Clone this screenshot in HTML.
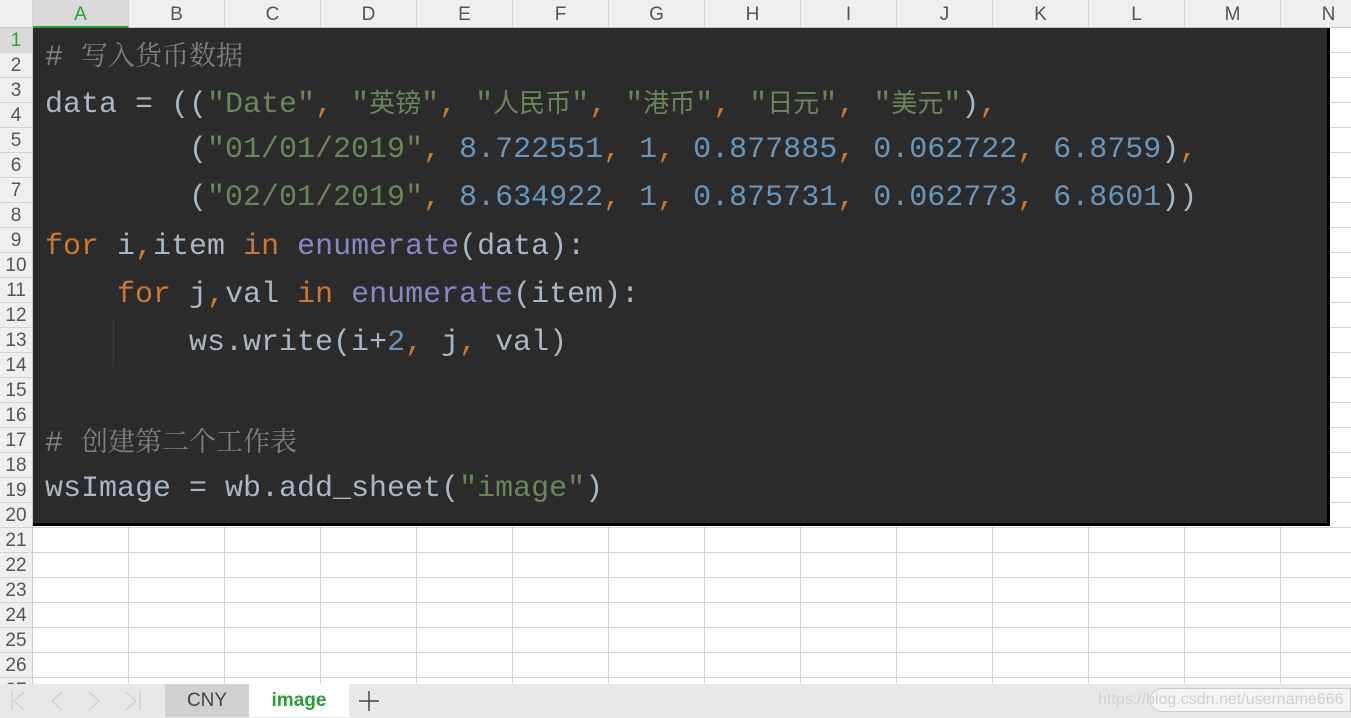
<!DOCTYPE html>
<html><head><meta charset="utf-8"><style>
*{margin:0;padding:0;box-sizing:border-box}
body{width:1351px;height:718px;overflow:hidden;background:#fff;font-family:"Liberation Sans",sans-serif;position:relative}
.grid{position:absolute;left:0;top:0;width:1351px;height:684px;
background-image:linear-gradient(to right,#d4d4d4 1px,transparent 1px),linear-gradient(to bottom,#d4d4d4 1px,transparent 1px);
background-size:96px 25px,96px 25px;background-position:32px 27px,0 27px}
.colh{position:absolute;left:0;top:0;width:1351px;height:28px;background:#efefef;border-bottom:1px solid #c8c8c8}
.colh div{position:absolute;top:0;height:27px;width:96px;text-align:center;line-height:30px;font-size:19px;color:#555;border-right:1px solid #d4d4d4}
.rowh{position:absolute;left:0;top:28px;width:33px;height:656px;background:#efefef;border-right:1px solid #c8c8c8}
.rowh div{position:absolute;left:0;width:32px;height:25px;line-height:26px;font-size:19px;color:#555;text-align:center;border-bottom:1px solid #d4d4d4}
.code{position:absolute;left:33px;top:28px;width:1297px;height:498px;background:#2b2b2b;border-right:3px solid #000;border-bottom:3px solid #000}
.ln{position:absolute;left:12px;height:40px;line-height:40px;font-family:"Liberation Mono","DejaVu Sans Mono",monospace;font-size:30px;color:#a9b7c6;white-space:pre}
.c{color:#808080}.k{color:#cc7832}.s{color:#6a8759}.n{color:#6897bb}.b{color:#8888c6}
.cj{font-family:"Noto Serif CJK SC",serif;font-size:27px;line-height:40px}
.cs{font-family:"Noto Sans CJK SC",sans-serif;font-size:26px;line-height:40px}
.tabs{position:absolute;left:0;top:684px;width:1351px;height:34px;background:#e8e8e8}
</style></head><body>
<div class="grid"></div>
<div class="colh">
<div style="left:0;width:33px;background:#efefef"></div>
<div style="left:33px;background:#d9d9d9;color:#2a9d3a;border-bottom:2px solid #2a9d3a;height:28px">A</div>
<div style="left:129px">B</div><div style="left:225px">C</div><div style="left:321px">D</div><div style="left:417px">E</div><div style="left:513px">F</div><div style="left:609px">G</div><div style="left:705px">H</div><div style="left:801px">I</div><div style="left:897px">J</div><div style="left:993px">K</div><div style="left:1089px">L</div><div style="left:1185px">M</div><div style="left:1281px">N</div>
</div>
<div class="rowh">
<div style="top:0;background:#d9d9d9;color:#2a9d3a">1</div><div style="top:25px">2</div><div style="top:50px">3</div><div style="top:75px">4</div><div style="top:100px">5</div><div style="top:125px">6</div><div style="top:150px">7</div><div style="top:175px">8</div><div style="top:200px">9</div><div style="top:225px">10</div><div style="top:250px">11</div><div style="top:275px">12</div><div style="top:300px">13</div><div style="top:325px">14</div><div style="top:350px">15</div><div style="top:375px">16</div><div style="top:400px">17</div><div style="top:425px">18</div><div style="top:450px">19</div><div style="top:475px">20</div><div style="top:500px">21</div><div style="top:525px">22</div><div style="top:550px">23</div><div style="top:575px">24</div><div style="top:600px">25</div><div style="top:625px">26</div><div style="top:650px">27</div>
</div>
<div class="code">
<div style="position:absolute;left:80px;top:290px;width:1px;height:48px;background:#3c3c3c"></div>
<div class="ln c" style="top:6px"># <span class="cj">写入货币数据</span></div>
<div class="ln" style="top:54px">data = ((<span class="s">"Date"</span><span class="k">, </span><span class="s">"<span class="cs">英镑</span>"</span><span class="k">, </span><span class="s">"<span class="cs">人民币</span>"</span><span class="k">, </span><span class="s">"<span class="cs">港币</span>"</span><span class="k">, </span><span class="s">"<span class="cs">日元</span>"</span><span class="k">, </span><span class="s">"<span class="cs">美元</span>"</span>)<span class="k">,</span></div>
<div class="ln" style="top:102px">        (<span class="s">"01/01/2019"</span><span class="k">, </span><span class="n">8.722551</span><span class="k">, </span><span class="n">1</span><span class="k">, </span><span class="n">0.877885</span><span class="k">, </span><span class="n">0.062722</span><span class="k">, </span><span class="n">6.8759</span>)<span class="k">,</span></div>
<div class="ln" style="top:150px">        (<span class="s">"02/01/2019"</span><span class="k">, </span><span class="n">8.634922</span><span class="k">, </span><span class="n">1</span><span class="k">, </span><span class="n">0.875731</span><span class="k">, </span><span class="n">0.062773</span><span class="k">, </span><span class="n">6.8601</span>))</div>
<div class="ln" style="top:199px"><span class="k">for</span> i<span class="k">,</span>item <span class="k">in</span> <span class="b">enumerate</span>(data):</div>
<div class="ln" style="top:247px">    <span class="k">for</span> j<span class="k">,</span>val <span class="k">in</span> <span class="b">enumerate</span>(item):</div>
<div class="ln" style="top:295px">        ws.write(i+<span class="n">2</span><span class="k">, </span>j<span class="k">, </span>val)</div>
<div class="ln c" style="top:392px"># <span class="cj">创建第二个工作表</span></div>
<div class="ln" style="top:441px">wsImage = wb.add_sheet(<span class="s">"image"</span>)</div>
</div>
<div class="tabs">
<svg style="position:absolute;left:0;top:0" width="160" height="34" stroke="#cfcfcf" stroke-width="1.5" fill="none">
<path d="M12 8v18M24 8l-10 9 10 9"/>
<path d="M62 8l-10 9 10 9"/>
<path d="M89 8l10 9-10 9"/>
<path d="M126 8l10 9-10 9M140 8v18"/>
</svg>
<div style="position:absolute;left:165px;top:0;width:84px;height:33px;background:#d0d0d0;text-align:center;line-height:34px;font-size:19px;color:#444">CNY</div>
<div style="position:absolute;left:249px;top:0;width:100px;height:33px;background:#fff;text-align:center;line-height:34px;font-size:19px;font-weight:bold;color:#2a9d3a">image</div>
<svg style="position:absolute;left:358px;top:6px" width="22" height="22" stroke="#444" stroke-width="1.5"><path d="M11 1v20M1 11h20"/></svg>
<div style="position:absolute;left:1150px;top:4px;width:201px;height:24px;border:1px solid #ccc;border-radius:12px 0 0 12px;background:#f4f4f4"></div>
<div style="position:absolute;left:1098px;top:7px;font-size:16px;color:#d0d0d0">https://blog.csdn.net/username666</div>
</div>
</body></html>
